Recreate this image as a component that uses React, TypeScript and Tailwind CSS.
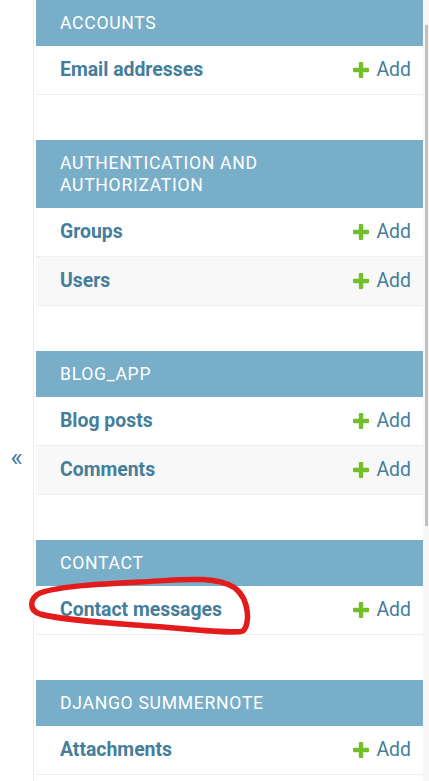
const modules = [
  { name: 'Accounts', models: ['Email addresses'] },
  { name: 'Authentication and Authorization', models: ['Groups', 'Users'] },
  { name: 'Blog_app', models: ['Blog posts', 'Comments'] },
  { name: 'Contact', models: ['Contact messages'] },
  { name: 'Django Summernote', models: ['Attachments'] },
]

const AddIcon = () => (
  <svg width="16" height="16" viewBox="192 192 1408 1408" className="shrink-0">
    <path
      fill="#70bf2b"
      d="M1600 796v192q0 40-28 68t-68 28h-416v416q0 40-28 68t-68 28h-192q-40 0-68-28t-28-68v-416h-416q-40 0-68-28t-28-68v-192q0-40 28-68t68-28h416v-416q0-40 28-68t68-28h192q40 0 68 28t28 68v416h416q40 0 68 28t28 68z"
    />
  </svg>
)

const App = () => {
  return (
    <div className="relative flex h-[781px] w-[429px] overflow-hidden bg-white font-['Roboto',sans-serif]">
      {/* collapse toggle */}
      <div className="w-[34px] shrink-0 border-r border-[#eee] pt-[444px] text-center">
        <span className="text-[26px] leading-none text-[#447e9b]">«</span>
      </div>

      <div className="ml-[2px] flex-1">
        {modules.map((m) => (
          <div key={m.name} className="mb-[45px]">
            <div className="bg-[#79aec8] py-3 pl-6 pr-10 text-[17.6px] leading-[22px] tracking-[0.7px] text-white uppercase">
              {m.name}
            </div>
            {m.models.map((model, i) => (
              <div
                key={model}
                className={`flex h-[49px] items-center justify-between border-b border-[#eee] pl-6 pr-3 ${i % 2 === 1 ? 'bg-[#f8f8f8]' : 'bg-white'}`}
              >
                <span className="text-[19.4px] font-bold text-[#447e9b]">{model}</span>
                <span className="flex items-center gap-[7px] text-[19.4px] text-[#447e9b]">
                  <AddIcon />
                  Add
                </span>
              </div>
            ))}
          </div>
        ))}
      </div>

      {/* scrollbar */}
      <div className="w-[6px] shrink-0 bg-[#f7f7f7] pl-[2px] pt-[25px]">
        <div className="h-[501px] w-[3px] bg-[#c1c1c1]" />
      </div>

      {/* red marker annotation */}
      <svg className="pointer-events-none absolute left-0 top-0" width="429" height="781">
        <path
          d="M40 593 C60 586 100 584 140 582 C180 580 215 575 235 588 C250 600 250 625 243 631 C235 634 200 630 150 626 C110 623 60 620 40 614 C28 610 30 598 40 593 Z"
          fill="none"
          stroke="#e31b1b"
          strokeWidth="5.5"
          strokeLinejoin="round"
        />
      </svg>
    </div>
  )
}

export default App
